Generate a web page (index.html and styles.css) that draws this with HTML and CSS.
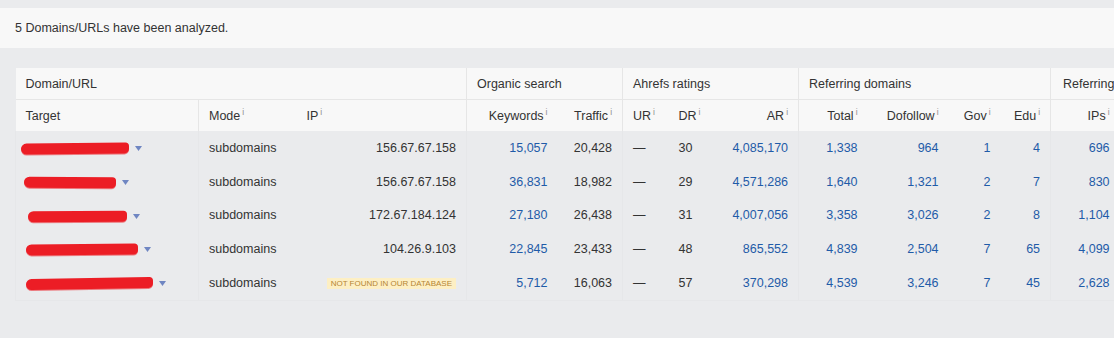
FILE: index.html
```html
<!DOCTYPE html>
<html>
<head>
<meta charset="utf-8">
<link rel="stylesheet" href="styles.css">
</head>
<body>
<div class="page">
  <div class="notice">5 Domains/URLs have been analyzed.</div>
  <div class="table-wrap">
    <table class="batch">
      <colgroup>
        <col class="c-target"><col class="c-mode"><col class="c-ip">
        <col class="c-kw"><col class="c-traffic">
        <col class="c-ur"><col class="c-dr"><col class="c-ar">
        <col class="c-total"><col class="c-dofollow"><col class="c-gov"><col class="c-edu">
        <col class="c-ips">
      </colgroup>
      <thead>
        <tr class="group-row">
          <th colspan="3" class="grp">Domain/URL</th>
          <th colspan="2" class="grp">Organic search</th>
          <th colspan="3" class="grp">Ahrefs ratings</th>
          <th colspan="4" class="grp">Referring domains</th>
          <th class="grp last">Referring IPs</th>
        </tr>
        <tr class="col-row">
          <th class="left sep">Target</th>
          <th class="left nosep">Mode<sup class="info">i</sup></th>
          <th class="left sep">IP<sup class="info">i</sup></th>
          <th class="right nosep">Keywords<sup class="info">i</sup></th>
          <th class="right sep">Traffic<sup class="info">i</sup></th>
          <th class="left nosep">UR<sup class="info">i</sup></th>
          <th class="left nosep">DR<sup class="info">i</sup></th>
          <th class="right sep">AR<sup class="info">i</sup></th>
          <th class="right nosep">Total<sup class="info">i</sup></th>
          <th class="right nosep">Dofollow<sup class="info">i</sup></th>
          <th class="right nosep">Gov<sup class="info">i</sup></th>
          <th class="right sep">Edu<sup class="info">i</sup></th>
          <th class="right nosep">IPs<sup class="info">i</sup></th>
        </tr>
      </thead>
      <tbody>
        <tr>
          <td class="sep target"><span class="redact" style="width:108px;margin-left:-5px"></span><svg class="caret" width="7" height="5" viewBox="0 0 7 5"><path d="M0 0h7L3.5 5z"/></svg></td>
          <td class="nosep">subdomains</td>
          <td class="right sep">156.67.67.158</td>
          <td class="right nosep link">15,057</td>
          <td class="right sep">20,428</td>
          <td class="nosep">—</td>
          <td class="nosep">30</td>
          <td class="right sep link">4,085,170</td>
          <td class="right nosep link">1,338</td>
          <td class="right nosep link">964</td>
          <td class="right nosep link">1</td>
          <td class="right sep link">4</td>
          <td class="right nosep link">696</td>
        </tr>
        <tr>
          <td class="sep target"><span class="redact r2" style="width:92px;margin-left:-2px"></span><svg class="caret" width="7" height="5" viewBox="0 0 7 5"><path d="M0 0h7L3.5 5z"/></svg></td>
          <td class="nosep">subdomains</td>
          <td class="right sep">156.67.67.158</td>
          <td class="right nosep link">36,831</td>
          <td class="right sep">18,982</td>
          <td class="nosep">—</td>
          <td class="nosep">29</td>
          <td class="right sep link">4,571,286</td>
          <td class="right nosep link">1,640</td>
          <td class="right nosep link">1,321</td>
          <td class="right nosep link">2</td>
          <td class="right sep link">7</td>
          <td class="right nosep link">830</td>
        </tr>
        <tr>
          <td class="sep target"><span class="redact r3" style="width:99px;margin-left:2px"></span><svg class="caret" width="7" height="5" viewBox="0 0 7 5"><path d="M0 0h7L3.5 5z"/></svg></td>
          <td class="nosep">subdomains</td>
          <td class="right sep">172.67.184.124</td>
          <td class="right nosep link">27,180</td>
          <td class="right sep">26,438</td>
          <td class="nosep">—</td>
          <td class="nosep">31</td>
          <td class="right sep link">4,007,056</td>
          <td class="right nosep link">3,358</td>
          <td class="right nosep link">3,026</td>
          <td class="right nosep link">2</td>
          <td class="right sep link">8</td>
          <td class="right nosep link">1,104</td>
        </tr>
        <tr>
          <td class="sep target"><span class="redact r4" style="width:112px;margin-left:0"></span><svg class="caret" width="7" height="5" viewBox="0 0 7 5"><path d="M0 0h7L3.5 5z"/></svg></td>
          <td class="nosep">subdomains</td>
          <td class="right sep">104.26.9.103</td>
          <td class="right nosep link">22,845</td>
          <td class="right sep">23,433</td>
          <td class="nosep">—</td>
          <td class="nosep">48</td>
          <td class="right sep link">865,552</td>
          <td class="right nosep link">4,839</td>
          <td class="right nosep link">2,504</td>
          <td class="right nosep link">7</td>
          <td class="right sep link">65</td>
          <td class="right nosep link">4,099</td>
        </tr>
        <tr>
          <td class="sep target"><span class="redact r5" style="width:127px;margin-left:0"></span><svg class="caret" width="7" height="5" viewBox="0 0 7 5"><path d="M0 0h7L3.5 5z"/></svg></td>
          <td class="nosep">subdomains</td>
          <td class="right sep"><span class="badge">NOT FOUND IN OUR DATABASE</span></td>
          <td class="right nosep link">5,712</td>
          <td class="right sep">16,063</td>
          <td class="nosep">—</td>
          <td class="nosep">57</td>
          <td class="right sep link">370,298</td>
          <td class="right nosep link">4,539</td>
          <td class="right nosep link">3,246</td>
          <td class="right nosep link">7</td>
          <td class="right sep link">45</td>
          <td class="right nosep link">2,628</td>
        </tr>
      </tbody>
    </table>
  </div>
</div>
</body>
</html>
```

FILE: styles.css
```css
html, body {
  margin: 0;
  padding: 0;
  background: #eaebed;
  overflow: hidden;
}

body {
  font-family: "Liberation Sans", Arial, sans-serif;
  font-size: 12.5px;
  color: #333;
}

.page {
  padding-top: 8px;
}

.notice {
  background: #f8f8f8;
  height: 40px;
  line-height: 40px;
  padding-left: 15px;
  color: #333;
}

.table-wrap {
  padding: 20px 0 0 15px;
}

.batch {
  border-collapse: collapse;
  table-layout: fixed;
  width: 1104px;
}

.c-target { width: 183px; }
.c-mode { width: 98px; }
.c-ip { width: 170px; }
.c-kw { width: 91px; }
.c-traffic { width: 65px; }
.c-ur { width: 46px; }
.c-dr { width: 52px; }
.c-ar { width: 78px; }
.c-total { width: 69px; }
.c-dofollow { width: 81px; }
.c-gov { width: 52px; }
.c-edu { width: 50px; }
.c-ips { width: 69px; }

.batch th {
  background: #f8f8f8;
  font-weight: normal;
  color: #333;
  padding: 0 10px;
  white-space: nowrap;
  overflow: hidden;
  text-align: left;
}

.group-row th {
  height: 31px;
  border-right: 1px solid #e6e6e6;
  border-bottom: 1px solid #e6e6e6;
}

.group-row th.last {
  padding-left: 12px;
  border-right: 0;
}

.col-row th {
  height: 31px;
}

.col-row th.sep {
  border-right: 1px solid #e6e6e6;
}

.batch .right {
  text-align: right;
}

.batch .left {
  text-align: left;
}

.info {
  font-size: 8.5px;
  color: #8e8e8e;
  vertical-align: top;
  position: relative;
  top: -1px;
  margin-left: 2px;
  line-height: 1;
}

.batch td {
  height: 33.8px;
  padding: 0 10px;
  white-space: nowrap;
  overflow: hidden;
  color: #333;
}

.batch td.sep {
  border-right: 1px solid #e6e7e9;
}

.batch tbody tr:last-child td {
  border-bottom: 1px solid #e6e7e9;
}

.batch tbody td:first-child {
  border-left: 1px solid #e6e7e9;
}

.batch td.link {
  color: #1f5ba8;
}

.batch td.target {
  padding-left: 10px;
  overflow: visible;
}

.redact {
  display: inline-block;
  vertical-align: middle;
  height: 11px;
  background: #ec1d25;
  border-radius: 6px 4px 5px 6px;
  transform: rotate(-0.6deg);
  box-shadow: 0 1px 0 rgba(236, 29, 37, 0.55);
}

.redact.r2 { transform: rotate(0.4deg); }
.redact.r3 { transform: rotate(-0.3deg); }
.redact.r4 { transform: rotate(-0.5deg); }
.redact.r5 { transform: rotate(-1deg); }

.caret {
  display: inline-block;
  vertical-align: middle;
  margin-left: 6px;
  fill: #6f86c2;
}

.badge {
  display: inline-block;
  background: #fdefc4;
  color: #b68632;
  font-size: 8px;
  line-height: 11px;
  padding: 0 4px;
  vertical-align: middle;
}
```
